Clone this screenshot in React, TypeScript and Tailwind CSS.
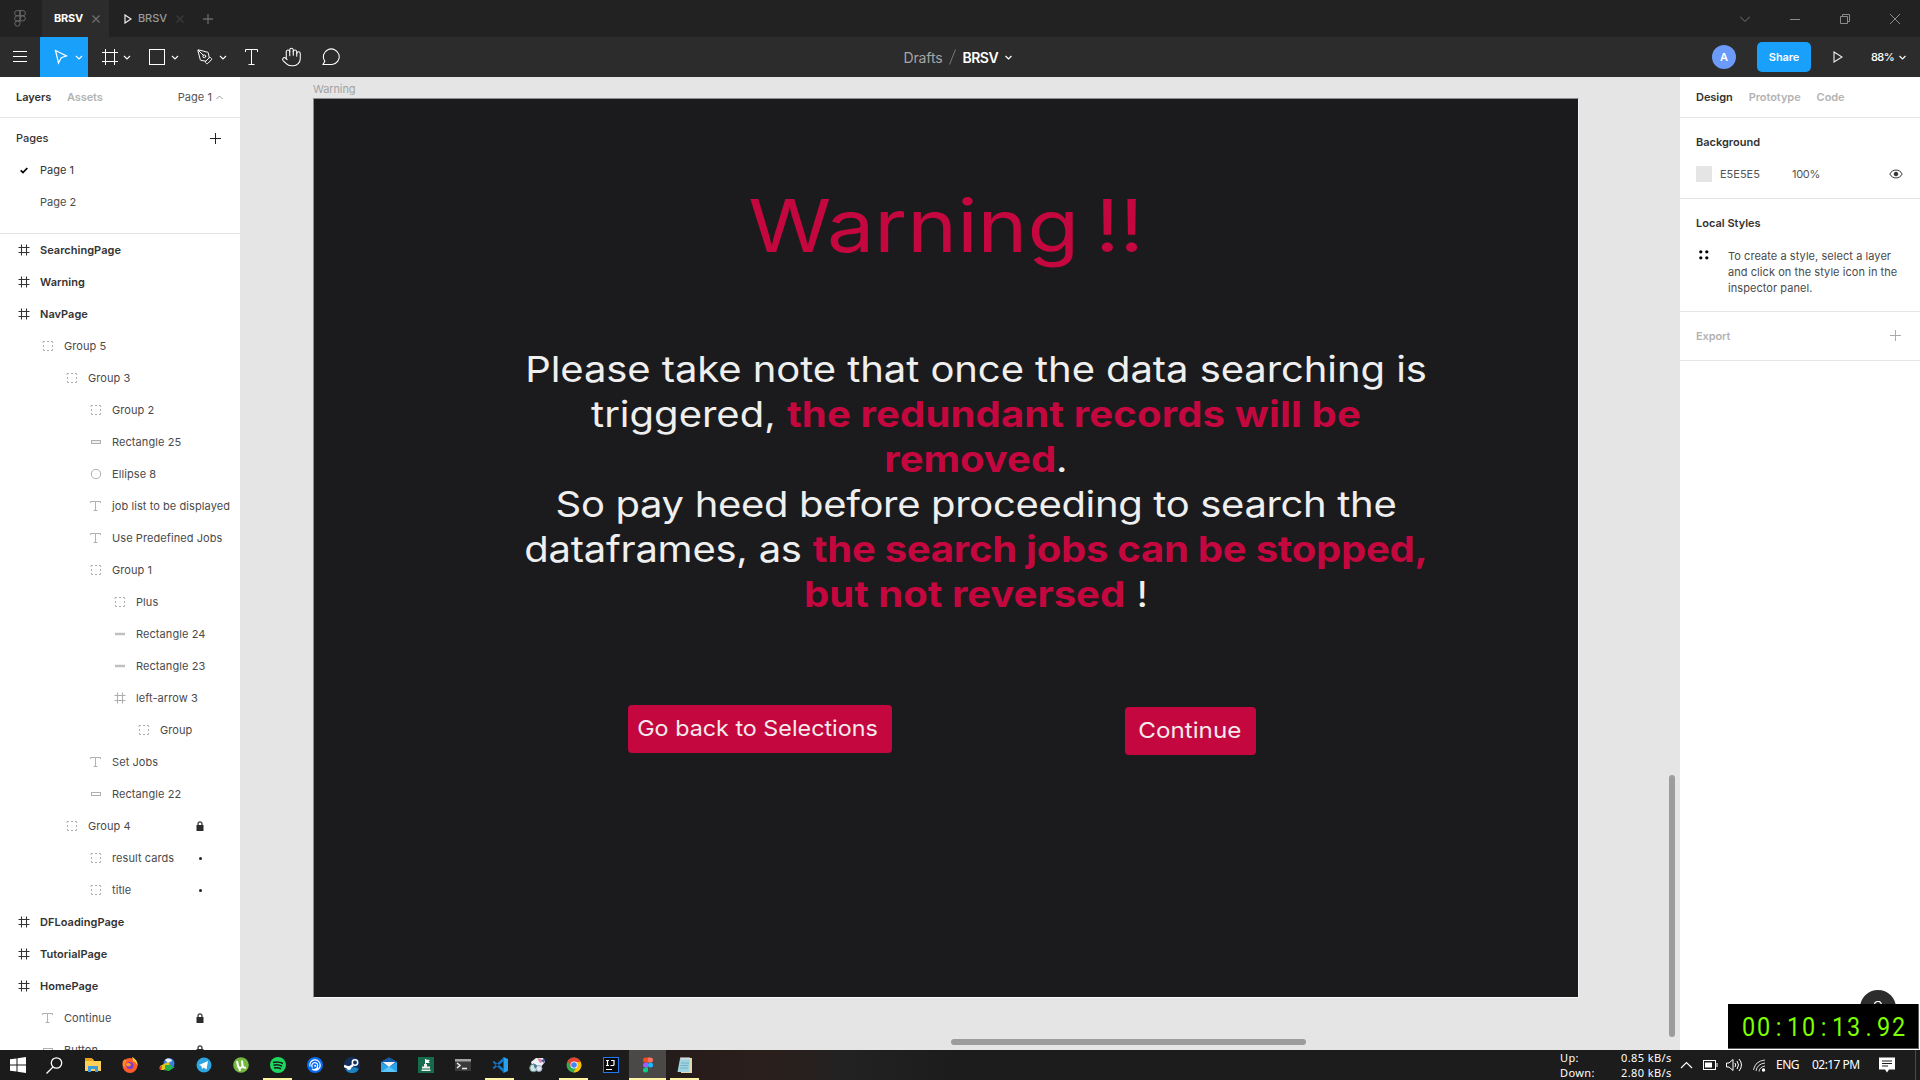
import type { ReactNode } from 'react';
import { Hand, PenTool } from 'lucide-react';

/* ---------- small shared drawings ---------- */

function Slot({ w = 48, active = false, chevron = true, children }: { w?: number; active?: boolean; chevron?: boolean; children: ReactNode }) {
  return (
    <div className={active ? 'flex h-10 bg-[#18a0fb]' : 'flex h-10'}>
      <svg width={w} height="40" viewBox={`0 0 ${w} 40`} fill="none" stroke="white" strokeWidth="1">
        {children}
        {chevron && <path d="M36 19l3 3 3-3" strokeWidth="1.1" />}
      </svg>
    </div>
  );
}

type Kind = 'frame' | 'frameLight' | 'group' | 'rect' | 'rectFill' | 'line' | 'ellipse' | 'text';

function LayerIcon({ kind }: { kind: Kind }) {
  const dark = kind === 'frame';
  return (
    <svg width="16" height="16" viewBox="0 0 16 16" fill="none" stroke={dark ? '#333' : '#b0b0b0'} strokeWidth="1" className="shrink-0">
      {(kind === 'frame' || kind === 'frameLight') && <path d="M5.5 2.5v11M10.5 2.5v11M2.5 5.5h11M2.5 10.5h11" strokeWidth="1.1" />}
      {kind === 'group' && (
        <path d="M3 5V3.500h2M7 3.500h2M11 3.500h1.500V5M12.500 7v2M12.500 11v1.500H11M9 12.500H7M5 12.500H3.500V11M3.500 9V7" />
      )}
      {kind === 'rect' && <rect x="3.500" y="6.500" width="9" height="3" />}
      {kind === 'rectFill' && <rect x="3.500" y="6.500" width="9" height="3" fill="#eee" />}
      {kind === 'line' && <path d="M3 8h10" strokeWidth="2.500" stroke="#c0c0c0" />}
      {kind === 'ellipse' && <circle cx="8" cy="8" r="4.700" />}
      {kind === 'text' && <path d="M2.500 5V3.500h10V5M7.500 3.500v9M5.500 12.500h4" />}
    </svg>
  );
}

function Lock() {
  return (
    <svg width="8" height="11" viewBox="0 0 8 11" className="shrink-0">
      <rect x="0.500" y="4" width="7" height="6" fill="#2c2c2c" />
      <path d="M2 5V2.800a2 2 0 0 1 4 0V5" fill="none" stroke="#2c2c2c" strokeWidth="1.200" />
    </svg>
  );
}

/* ---------- top bars ---------- */

function TitleBar() {
  return (
    <div className="flex h-[37px] shrink-0 items-center bg-[#222222] text-[11px]">
      <div className="flex w-[42px] items-center pl-[14px]">
        <svg width="12" height="17" viewBox="0 0 12 17" fill="none" stroke="#6a6a6a" strokeWidth="1">
          <path d="M6 0.600H3.200a2.600 2.600 0 0 0 0 5.200H6zM6 0.600h2.800a2.600 2.600 0 0 1 0 5.200H6zM6 5.800H3.200a2.600 2.600 0 0 0 0 5.200H6zM6 11H3.200A2.600 2.600 0 1 0 6 13.600z" />
          <circle cx="8.700" cy="8.400" r="2.600" />
        </svg>
      </div>
      <div className="flex h-full w-[67px] items-center bg-[#2c2c2c] pl-3">
        <span className="w-[29px] font-bold tracking-[-0.2px] text-white">BRSV</span>
        <svg width="8" height="8" viewBox="0 0 8 8" className="ml-[9px]" stroke="#6f6f6f" strokeWidth="1.300">
          <path d="M0.500 0.500l7 7M7.500 0.500l-7 7" />
        </svg>
      </div>
      <svg width="8" height="10" viewBox="0 0 8 10" className="ml-[15px]" fill="none" stroke="#eee" strokeWidth="1.200">
        <path d="M1 1l6 4-6 4z" />
      </svg>
      <span className="ml-[6px] w-[30px] font-medium tracking-[-0.1px] text-[#9a9a9a]">BRSV</span>
      <svg width="8" height="8" viewBox="0 0 8 8" className="ml-2" stroke="#3a3a3a" strokeWidth="1.300">
        <path d="M0.500 0.500l7 7M7.500 0.500l-7 7" />
      </svg>
      <svg width="10" height="10" viewBox="0 0 10 10" className="ml-[19px]" stroke="#686868" strokeWidth="1.300">
        <path d="M5 0v10M0 5h10" />
      </svg>
      <div className="ml-auto flex items-center gap-10 pr-5">
        <svg width="10" height="10" viewBox="0 0 10 10" fill="none" stroke="#777"><path d="M0 2.500l5 5 5-5" /></svg>
        <svg width="10" height="10" viewBox="0 0 10 10" stroke="#8a8a8a"><path d="M0 5.500h10" /></svg>
        <svg width="10" height="10" viewBox="0 0 10 10" fill="none" stroke="#8a8a8a"><path d="M0.500 2.500h7v7h-7zM2.500 2.500v-2h7v7h-2" /></svg>
        <svg width="10" height="10" viewBox="0 0 10 10" stroke="#8a8a8a"><path d="M0 0l10 10M10 0L0 10" /></svg>
      </div>
    </div>
  );
}

function Toolbar() {
  return (
    <div className="grid h-10 shrink-0 grid-cols-[1fr_auto_1fr] bg-[#2c2c2c] text-white">
      <div className="flex">
        <Slot w={40} chevron={false}><path d="M13 14.500h14M13 19.500h14M13 24.500h14" /></Slot>
        <Slot active><path d="M15.500 13.500l11 5.500-5.200 1.700-2.800 5.300z" strokeWidth="1.200" /></Slot>
        <Slot><path d="M17.500 12v16M26.500 12v16M14 15.500h16M14 24.500h16" /></Slot>
        <Slot><rect x="13.500" y="12.500" width="15" height="15" /></Slot>
        <Slot><PenTool x="12.500" y="11.500" width="17" height="17" strokeWidth={1.400} /></Slot>
        <Slot w={40} chevron={false}><path d="M13.500 15v-2.500h12V15M19.500 12.500v15M16.500 27.500h6" /></Slot>
        <Slot w={40} chevron={false}><Hand x="9" y="9" width="21" height="22" strokeWidth={1.200} /></Slot>
        <Slot w={40} chevron={false}><path d="M11 27.500l1.800-3.200a8 7.800 0 1 1 7.200 3.200z" strokeWidth="1.100" /></Slot>
      </div>
      <div className="flex items-center pr-[5px] text-[14px]">
        <span className="w-[39px] tracking-[-0.13px] text-[#a5a5a5]">Drafts</span>
        <svg width="7" height="16" viewBox="0 0 7 16" className="mr-[7px] ml-[6px]" stroke="#777"><path d="M6.500 0.500l-6 15" /></svg>
        <span className="w-9 font-semibold tracking-[-0.5px]">BRSV</span>
        <svg width="7" height="5" viewBox="0 0 7 5" className="ml-[6px]" fill="none" stroke="white" strokeWidth="1.200"><path d="M0.500 1l3 3 3-3" /></svg>
      </div>
      <div className="flex items-center justify-end text-[11px]">
        <div className="flex size-6 items-center justify-center rounded-full bg-[#6b9af8] font-semibold">A</div>
        <div className="ml-[21px] flex h-[30px] w-[54px] items-center justify-center rounded-[5px] bg-[#18a0fb] font-semibold tracking-[-0.1px]">Share</div>
        <svg width="10" height="12" viewBox="0 0 10 12" className="ml-[22px]" fill="none" stroke="#eee" strokeWidth="1.100"><path d="M1 1l8 5-8 5z" /></svg>
        <span className="ml-7 w-[23px] font-medium tracking-[-0.6px]">88%</span>
        <svg width="7" height="5" viewBox="0 0 7 5" className="mr-[14px] ml-[5px]" fill="none" stroke="white" strokeWidth="1.100"><path d="M0.500 1l3 3 3-3" /></svg>
      </div>
    </div>
  );
}

/* ---------- left panel ---------- */

type Layer = { name: string; kind: Kind; depth: 0 | 1 | 2 | 3 | 4 | 5; mark?: 'lock' | 'dot' };

const layers: Layer[] = [
  { name: 'SearchingPage', kind: 'frame', depth: 0 },
  { name: 'Warning', kind: 'frame', depth: 0 },
  { name: 'NavPage', kind: 'frame', depth: 0 },
  { name: 'Group 5', kind: 'group', depth: 1 },
  { name: 'Group 3', kind: 'group', depth: 2 },
  { name: 'Group 2', kind: 'group', depth: 3 },
  { name: 'Rectangle 25', kind: 'rectFill', depth: 3 },
  { name: 'Ellipse 8', kind: 'ellipse', depth: 3 },
  { name: 'job list to be displayed', kind: 'text', depth: 3 },
  { name: 'Use Predefined Jobs', kind: 'text', depth: 3 },
  { name: 'Group 1', kind: 'group', depth: 3 },
  { name: 'Plus', kind: 'group', depth: 4 },
  { name: 'Rectangle 24', kind: 'line', depth: 4 },
  { name: 'Rectangle 23', kind: 'line', depth: 4 },
  { name: 'left-arrow 3', kind: 'frameLight', depth: 4 },
  { name: 'Group', kind: 'group', depth: 5 },
  { name: 'Set Jobs', kind: 'text', depth: 3 },
  { name: 'Rectangle 22', kind: 'rect', depth: 3 },
  { name: 'Group 4', kind: 'group', depth: 2, mark: 'lock' },
  { name: 'result cards', kind: 'group', depth: 3, mark: 'dot' },
  { name: 'title', kind: 'group', depth: 3, mark: 'dot' },
  { name: 'DFLoadingPage', kind: 'frame', depth: 0 },
  { name: 'TutorialPage', kind: 'frame', depth: 0 },
  { name: 'HomePage', kind: 'frame', depth: 0 },
  { name: 'Continue', kind: 'text', depth: 1, mark: 'lock' },
  { name: 'Button', kind: 'rect', depth: 1, mark: 'lock' },
];

const indent = ['pl-4', 'pl-10', 'pl-16', 'pl-[88px]', 'pl-28', 'pl-[136px]'];

function LeftPanel() {
  return (
    <aside className="flex w-60 shrink-0 flex-col overflow-hidden bg-white text-[11px] text-[#333]">
      <div className="flex h-[41px] shrink-0 items-center border-b border-[#e5e5e5] pr-[17px] pl-4">
        <span className="w-[51px] font-semibold tracking-[-0.05px]">Layers</span>
        <span className="font-semibold tracking-[-0.1px] text-[#b3b3b3]">Assets</span>
        <span className="ml-auto tracking-[0.05px] text-[#555]">Page 1</span>
        <svg width="7" height="5" viewBox="0 0 7 5" className="ml-1" fill="none" stroke="#999"><path d="M0.500 4l3-3 3 3" /></svg>
      </div>
      <div className="h-[116px] shrink-0 border-b border-[#e5e5e5] pt-1">
        <div className="flex h-8 items-center justify-between pr-[19px] pl-4">
          <span className="font-medium">Pages</span>
          <svg width="11" height="11" viewBox="0 0 11 11" stroke="#222"><path d="M5.500 0v11M0 5.500h11" /></svg>
        </div>
        <div className="flex h-8 items-center pl-5">
          <svg width="8" height="7" viewBox="0 0 8 7" className="mr-3" fill="none" stroke="#000" strokeWidth="1.700"><path d="M0.700 3.300l2.300 2.300L7.300 1" /></svg>
          Page 1
        </div>
        <div className="flex h-8 items-center pl-10 text-[#4d4d4d]">Page 2</div>
      </div>
      {layers.map((l, i) => (
        <div key={i} className={`flex h-8 shrink-0 items-center gap-2 whitespace-nowrap ${indent[l.depth]}`}>
          <LayerIcon kind={l.kind} />
          <span className={l.kind === 'frame' ? 'font-semibold tracking-[0.03px]' : 'tracking-[0.08px] text-[#4a4a4a]'}>{l.name}</span>
          {l.mark && (
            <span className="mr-[36.5px] ml-auto flex w-2 justify-center">
              {l.mark === 'lock' ? <Lock /> : <span className="mr-[-2px] size-[3px] rounded-full bg-[#222]" />}
            </span>
          )}
        </div>
      ))}
    </aside>
  );
}

/* ---------- canvas ---------- */

function Canvas() {
  const red = 'font-bold text-[#c4073e]';
  return (
    <main className="relative min-w-0 flex-1 overflow-hidden bg-[#e5e5e5] pl-[73px]">
      <div className="h-[21px] pt-1 text-[11px] leading-[17px] tracking-[-0.1px] text-[#a3a3a3]">Warning</div>
      <section className="h-[900px] w-[1266px] border border-[#8c8d8e] border-r-[#f4f4f4] border-b-[#f8f8f8] bg-[#1b1b1d] pt-[87px]">
        <h1 className="scale-x-[1.155] text-center text-[73px] leading-[80px] [word-spacing:-6.5px] text-[#c4073e]">Warning !!</h1>
        <div className="mt-[82px] ml-[212px] h-[270px] w-[900px] scale-x-[1.127] text-center text-[35.5px] leading-[44.95px] whitespace-nowrap text-[#efefef]">
          <p className="mx-[-20px] tracking-[-0.07px]">Please take note that once the data searching is</p>
          <p>triggered, <span className={`${red} tracking-[0.14px]`}>the redundant records will be</span></p>
          <p><span className={red}>removed</span>.</p>
          <p className="tracking-[-0.3px]">So pay heed before proceeding to search the</p>
          <p className="tracking-[-0.22px]">dataframes, as <span className={red}>the search jobs can be stopped,</span></p>
          <p><span className={red}>but not reversed</span> !</p>
        </div>
        <div className="mt-[87px] flex items-start pl-[313.5px] text-[22px] text-[#f4e9ec]">
          <div className="flex h-12 w-[264px] items-center justify-center rounded bg-[#c4073e] pr-[3px] pb-[2px]">
            <span className="scale-x-[1.06] whitespace-nowrap">Go back to Selections</span>
          </div>
          <div className="mt-[2px] ml-[233px] flex h-12 w-[131px] items-center justify-center rounded bg-[#c4073e] pb-[2px]">
            <span className="scale-x-[1.1]">Continue</span>
          </div>
        </div>
      </section>
      <div className="absolute right-[5px] bottom-[13px] h-[262px] w-[6px] rounded-full bg-[#9c9c9c]" />
      <div className="absolute bottom-[5px] left-[711px] h-[6px] w-[355px] rounded-full bg-[#9c9c9c]" />
    </main>
  );
}

/* ---------- right panel ---------- */

function RightPanel() {
  return (
    <aside className="w-60 shrink-0 bg-white text-[11px] text-[#333]">
      <div className="flex h-[41px] items-center gap-4 border-b border-[#e5e5e5] pl-4 font-semibold tracking-[-0.05px]">
        <span>Design</span>
        <span className="text-[#b3b3b3]">Prototype</span>
        <span className="text-[#b3b3b3]">Code</span>
      </div>
      <div className="h-[81px] border-b border-[#e5e5e5] pt-2">
        <div className="flex h-8 items-center pl-4 font-semibold">Background</div>
        <div className="flex h-8 items-center pr-[17px] pl-4 text-[#555]">
          <span className="size-4 bg-[#e5e5e5]" />
          <span className="ml-2 w-[72px]">E5E5E5</span>
          <span className="tracking-[-0.3px]">100%</span>
          <svg width="14" height="10" viewBox="0 0 14 10" className="ml-auto" fill="none" stroke="#333">
            <path d="M0.800 5C3.500 -0.300 10.500 -0.300 13.200 5 10.500 10.300 3.500 10.300 0.800 5z" />
            <circle cx="7" cy="5" r="1.800" fill="#333" />
          </svg>
        </div>
      </div>
      <div className="h-[113px] border-b border-[#e5e5e5] pt-2">
        <div className="flex h-8 items-center pl-4 font-semibold">Local Styles</div>
        <div className="flex pt-[10px] pl-[19px]">
          <svg width="10" height="10" viewBox="0 0 10 10" className="mt-px" fill="#000">
            <circle cx="1.800" cy="1.800" r="1.600" /><circle cx="7.800" cy="1.800" r="1.600" />
            <circle cx="1.800" cy="7.800" r="1.600" /><circle cx="7.800" cy="7.800" r="1.600" />
          </svg>
          <p className="mt-[-1px] ml-[19px] w-[180px] leading-4 tracking-[0.06px] text-[#4a4a4a]">
            To create a style, select a layer<br />and click on the style icon in the<br />inspector panel.
          </p>
        </div>
      </div>
      <div className="flex h-[49px] items-center justify-between border-b border-[#e5e5e5] pr-[19px] pl-4 font-semibold text-[#b3b3b3]">
        <span className="tracking-[-0.1px]">Export</span>
        <svg width="11" height="11" viewBox="0 0 11 11" className="mb-[2px]" stroke="#aaa"><path d="M5.500 0v11M0 5.500h11" /></svg>
      </div>
    </aside>
  );
}

/* ---------- taskbar ---------- */

type TaskApp = { icon: ReactNode; state?: 'open' | 'active' };

const apps: TaskApp[] = [
  { icon: <><path d="M0 2h8l1 2h7v10H0z" fill="#ffcf57" /><path d="M0 1h7l1 3H0z" fill="#e8a317" /><path d="M3 9h10v6h-3v-3H6v3H3z" fill="#3b9be0" /></> },
  { icon: <><circle cx="8" cy="8.500" r="7.500" fill="#ff5a2c" /><path d="M10 0c4 2 6 5 5.400 9-1-3-2-4-4.400-5 .2-2-.8-2.500-1-4z" fill="#ffd23c" /><path d="M1 4l2-2 2 2c-2 1-3 4-1 7-3-1-4-4-3-7z" fill="#ff8a2a" /><circle cx="8" cy="8.500" r="3.600" fill="#7a3fd0" /><path d="M4 7c2-2 5-1 5 1-1 2-3 1-4 1z" fill="#ff9a28" /></> },
  { icon: <><circle cx="10" cy="6.500" r="5.500" fill="#3c7edb" /><path d="M6 3c3-3 7-1 7 1L9 6z" fill="#e6eef8" /><path d="M1 9l8-4 2 2-6 6H1z" fill="#e5c81f" /><path d="M6 8l7 0v2h3l-6 4-6-1h2z" fill="#23b14d" /><path d="M0 10l3-1-.5 4H1z" fill="#d64531" /></> },
  { icon: <><circle cx="8" cy="8" r="7.500" fill="#2ca5e0" /><path d="M3 8l9-4-1.500 8.500-3-2-1.500 1.500-.5-3z" fill="#fff" /></> },
  { icon: <><circle cx="8" cy="8" r="7.800" fill="#76b83f" /><path d="M4 4l1 5c.5 2.500 4 2.500 4.500 0L9 3.500M9.500 8c.3 2 1.500 3 3.500 2.500M6 10l1 4" fill="none" stroke="#fff" strokeWidth="2" /></> },
  { icon: <><circle cx="8" cy="8" r="8" fill="#1ed760" /><path d="M3 5.500c3.500-1 7-.7 10 1M3.500 8.300c3-.8 6-.5 8.500 1M4 11c2.500-.6 5-.4 7 .8" fill="none" stroke="#1b1b1b" strokeWidth="1.500" /></>, state: 'open' },
  { icon: <><circle cx="8" cy="8" r="8" fill="#0a6cf0" /><path d="M3 9.500A5.200 5.200 0 1 1 13.200 8 5 5 0 0 1 5 12M5.500 10.500A3 3 0 1 1 10.800 8.500M6 12.500q5 0 4.500-4" fill="none" stroke="#fff" strokeWidth="1.200" /><circle cx="8.200" cy="8.700" r="1" fill="#fff" /></> },
  { icon: <><circle cx="8" cy="8" r="8" fill="#12305e" /><path d="M1 12a8 8 0 0 0 14 0l-4-2z" fill="#1c7fc0" /><circle cx="11" cy="5.500" r="2.700" fill="none" stroke="#fff" strokeWidth="1.500" /><path d="M0 9l5 2 4-3" stroke="#fff" strokeWidth="2.500" fill="none" /><circle cx="5" cy="11" r="2" fill="#fff" /></> },
  { icon: <><path d="M0 5l8-4.500L16 5v10H0z" fill="#2aa4e8" /><path d="M0 5l8-4.500L16 5l-8 5z" fill="#0c5aa8" /><path d="M1.500 5h13L8 10z" fill="#f2f2f2" /><path d="M0 15l8-5.500L16 15z" fill="#5cc6fa" /></> },
  { icon: <><rect width="16" height="16" fill="#176b4d" /><path d="M7.500 2v7" stroke="#fff" /><path d="M7 2.500l5 .5-1.500 1.500L12 6H7z" fill="#fff" /><path d="M6 7h3v2.500h3v2H4v-2h2zM3.500 12.500h9V14h-9z" fill="#eee" /></> },
  { icon: <><rect y="2" width="16" height="12" fill="#3a3a3a" /><rect y="2" width="16" height="2.500" fill="#a5a5a5" /><path d="M2 6l3 2.500L2 11M7 11.500h5" stroke="#eee" strokeWidth="1.500" fill="none" /></> },
  { icon: <><path d="M11.500 0L16 2v12l-4.500 2z" fill="#29a0ec" /><path d="M0.500 5L2 4l10 8v4zM0.500 11L2 12l10-8V0z" fill="#1277c8" /></>, state: 'open' },
  { icon: <><path d="M2 5l5-4h7l2 4-5 6H4z" fill="#eef0fa" /><circle cx="4.500" cy="11" r="3.800" fill="#cfe4dd" stroke="#5f8c87" /><circle cx="10" cy="11.500" r="3" fill="#dfe6f0" stroke="#8fa4c0" /><path d="M8 1l4 1 2 3-3 1z" fill="#d88a9a" /><path d="M4 6l4 3-2 3z" fill="#3f7699" /><path d="M12 3l4-1-1 4z" fill="#4254b8" /></> },
  { icon: <><circle cx="8" cy="8" r="7.500" fill="#34a853" /><path d="M1.500 4.200A7.500 7.500 0 0 1 14.800 5H8z" fill="#ea4335" /><path d="M14.800 5A7.500 7.500 0 0 1 7.500 15.500L11 9 8 5z" fill="#fbbc05" /><path d="M1.500 4.200L5 10l3-5z" fill="#ea4335" /><circle cx="8" cy="8" r="3.500" fill="#fff" /><circle cx="8" cy="8" r="2.800" fill="#4285f4" /></>, state: 'open' },
  { icon: <><rect x="0.500" y="0.500" width="15" height="15" fill="#0a0a0a" stroke="#2476f2" /><path d="M3 3.500h3M4.500 3.500v5M3 8.500h3M8 3.500h3v4q0 1-1 1H7.500M3 12.500h6" stroke="#fff" strokeWidth="1.200" fill="none" /></> },
  { icon: <><path d="M8 0.500H5.500a2.500 2.500 0 0 0 0 5H8z" fill="#f24e1e" /><path d="M8 0.500h2.500a2.500 2.500 0 0 1 0 5H8z" fill="#ff7262" /><path d="M8 5.500H5.500a2.500 2.500 0 0 0 0 5H8z" fill="#a259ff" /><circle cx="10.500" cy="8" r="2.500" fill="#1abcfe" /><path d="M8 10.500H5.500A2.500 2.500 0 1 0 8 13z" fill="#0acf83" /></>, state: 'active' },
  { icon: <><path d="M4 1h11v15H4z" fill="#e3d9ae" /><path d="M3 1.500h10L12 15H0.500z" fill="#9fd3df" /><path d="M4 6h8M3.500 8.500h8M3 11h8" stroke="#6fb2c6" /><path d="M4 0v2.500M6 0v2.500M8 0v2.500M10 0v2.500M12 0v2.500" stroke="#e8e8e8" /></>, state: 'open' },
];

function Taskbar() {
  return (
    <footer className='flex h-[30px] shrink-0 items-center bg-[#1c1c1c] bg-[linear-gradient(90deg,#1b1b1b_600px,#291d1b_710px,#291f1c_780px,#232222_840px,#1c1c1c_960px)] font-["Noto_Sans",sans-serif] text-[12px] text-white'>
      <svg width="16" height="16" viewBox="0 0 16 16" className="ml-[10px]" fill="#fff"><path d="M0 2.300L6.500 1.400v6.100H0zM7.500 1.200L16 0v7.500H7.500zM0 8.500h6.500v6.100L0 13.700zM7.500 8.500H16V16l-8.500-1.200z" /></svg>
      <svg width="17" height="17" viewBox="0 0 17 17" className="mr-[11px] ml-5" fill="none" stroke="#fff" strokeWidth="1.300"><circle cx="10.500" cy="6" r="5.200" /><path d="M7 10l-6.500 6.500" /></svg>
      {apps.map((a, i) => (
        <div key={i} className={a.state === 'active' ? 'relative flex h-[30px] w-[37px] items-center justify-center bg-[#4b4848]' : 'relative flex h-[30px] w-[37px] items-center justify-center'}>
          <svg width="16" height="16" viewBox="0 0 16 16">{a.icon}</svg>
          {a.state && <span className={a.state === 'active' ? 'absolute inset-x-0 bottom-0 h-[2px] bg-[#fff3a6]' : 'absolute inset-x-[4px] bottom-0 h-[2px] bg-[#fff3a6]'} />}
        </div>
      ))}
      <div className="ml-auto grid w-[113px] grid-cols-[61px_1fr] text-[11px] leading-[15px] tracking-[0.4px]">
        <span>Up:</span><span className="whitespace-nowrap">0.85 kB/s</span>
        <span>Down:</span><span className="whitespace-nowrap">2.80 kB/s</span>
      </div>
      <svg width="13" height="8" viewBox="0 0 13 8" className="ml-[7px]" fill="none" stroke="#fff" strokeWidth="1.200"><path d="M1 7l5.500-5.500L12 7" /></svg>
      <svg width="15" height="10" viewBox="0 0 15 10" className="ml-[10px]"><rect x="0.500" y="0.500" width="12" height="9" fill="none" stroke="#fff" /><rect x="2" y="2.500" width="7" height="5" fill="#fff" /><path d="M14 3v4" stroke="#fff" /></svg>
      <svg width="17" height="14" viewBox="0 0 17 14" className="ml-2" fill="none" stroke="#fff"><path d="M0.500 5v4h2.500l4 3.500v-11L3 5zM9 5q1.500 2 0 4M11 3q3 4 0 8M13 1q5 6 0 12" /></svg>
      <svg width="13" height="13" viewBox="0 0 13 13" className="ml-[10px]" fill="none" stroke="#ddd"><path d="M0.500 11Q2 2 12 1M3 12Q4 5 12 4M6 12.500Q6.500 8 12 7" /><circle cx="10.500" cy="11" r="1.700" fill="#fff" stroke="none" /></svg>
      <span className="ml-[10px] w-[36px] tracking-[-0.5px]">ENG</span>
      <span className="w-[48px] tracking-[-0.55px] whitespace-nowrap">02:17 PM</span>
      <svg width="16" height="16" viewBox="0 0 16 16" className="mr-5 ml-[19px]"><path d="M0 0.500h16v12h-6L8 15.500l-2-3H0z" fill="#fff" /><path d="M3 4h10M3 6.500h10M3 9h6" stroke="#1c1c1c" /></svg>
      <div className="mr-[4px] h-[30px] w-px bg-[#4a4a4a]" />
    </footer>
  );
}

function Timer() {
  return (
    <div className='absolute top-[1004px] left-[1728px] flex h-[45px] w-[191px] items-center border-r border-b border-[#5a5a5a] bg-black pl-[13px] pt-px font-["Roboto",sans-serif] text-[26px] leading-none text-[#7dff00]'>
      {'00:10:13.92'.split('').map((c, i) => (
        <span key={i} className="w-[15px] scale-x-[0.9] text-center">{c}</span>
      ))}
    </div>
  );
}

export default function App() {
  return (
    <div className='relative flex h-[1080px] w-[1920px] flex-col overflow-hidden bg-[#e5e5e5] font-["Inter",sans-serif]'>
      <TitleBar />
      <Toolbar />
      <div className="flex min-h-0 flex-1">
        <LeftPanel />
        <Canvas />
        <RightPanel />
      </div>
      <Taskbar />
      <div className="absolute top-[990px] left-[1860px] flex size-9 justify-center rounded-full bg-[#2c2c2c]">
        <svg width="10" height="10" viewBox="0 0 10 10" className="mt-[11px]" fill="none" stroke="#fff" strokeWidth="1.200"><path d="M1.500 4.500a3.500 3.500 0 1 1 5 2.500L5 8.500" /></svg>
      </div>
      <Timer />
    </div>
  );
}
